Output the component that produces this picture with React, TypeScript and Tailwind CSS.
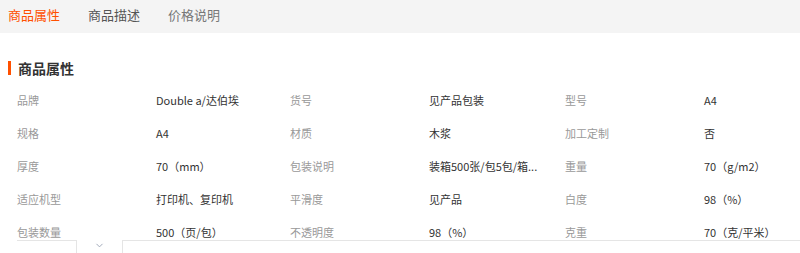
import { ChevronDown } from 'lucide-react'

const tabs = ['商品属性', '商品描述', '价格说明']

const rows: [string, string][][] = [
  [['品牌', 'Double a/达伯埃'], ['货号', '见产品包装'], ['型号', 'A4']],
  [['规格', 'A4'], ['材质', '木浆'], ['加工定制', '否']],
  [['厚度', '70（mm）'], ['包装说明', '装箱500张/包5包/箱...'], ['重量', '70（g/m2）']],
  [['适应机型', '打印机、复印机'], ['平滑度', '见产品'], ['白度', '98（%）']],
  [['包装数量', '500（页/包）'], ['不透明度', '98（%）'], ['克重', '70（克/平米）']],
]

export default function App() {
  return (
    <div
      className="relative h-[253px] w-[800px] overflow-hidden bg-white"
      style={{ fontFamily: '"Noto Sans CJK SC", "Noto Sans", sans-serif' }}
    >
      {/* tab bar */}
      <div className="flex h-[33px] items-center gap-[28px] bg-[#f4f4f4] pb-[3px] pl-[8px] text-[13px]">
        {tabs.map((t, i) => (
          <span key={t} className={i === 0 ? 'text-[#ff5000]' : i === 1 ? 'text-[#555]' : 'text-[#777]'}>
            {t}
          </span>
        ))}
      </div>

      {/* section title */}
      <div className="mt-[25px] flex h-[20px] items-center gap-[7px] pl-[8px]">
        <span className="h-[14px] w-[3px] bg-[#ff5000]" />
        <span className="text-[14px] font-bold text-[#333]">商品属性</span>
      </div>

      {/* attribute table */}
      <div className="mt-[6px] pl-[17px] text-[11px]">
        {rows.map((row, ri) => (
          <div key={ri} className="flex h-[33px] items-center">
            {row.map(([label, value], ci) => (
              <div key={ci} className={`flex shrink-0 items-center ${ci === 0 ? 'w-[273px]' : 'w-[275px]'}`}>
                <span className="w-[139px] shrink-0 text-[#999]">{label}</span>
                <span className="w-[120px] whitespace-nowrap text-[#333]">{value}</span>
              </div>
            ))}
          </div>
        ))}
      </div>

      {/* expand bar overlay */}
      <div className="absolute left-0 right-0 top-[240px] bottom-0 flex">
        <div className="w-[17px]" />
        <div className="w-[60px] border-r border-t border-[#e5e5e5] bg-white" />
        <div className="flex w-[45px] justify-center">
          <ChevronDown size={11} strokeWidth={2} className="text-[#9aa3b5]" />
        </div>
        <div className="flex-1 border-l border-t border-[#e5e5e5] bg-white" />
      </div>
    </div>
  )
}
